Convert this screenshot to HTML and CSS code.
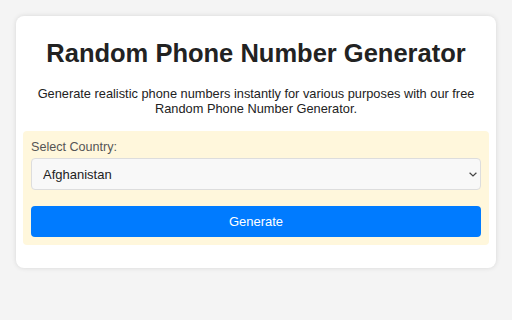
FILE: index.html
```html
<!DOCTYPE html>
<html lang="en">
<head>
<meta charset="utf-8">
<title>Random Phone Number Generator</title>
<link rel="stylesheet" href="styles.css">
</head>
<body>
<main class="card">
  <h1 class="title">Random Phone Number Generator</h1>
  <p class="lead">Generate realistic phone numbers instantly for various purposes with our free Random Phone Number Generator.</p>
  <form class="panel">
    <label class="label" for="country">Select Country:</label>
    <div class="select-wrap">
      <select id="country" class="select">
        <option>Afghanistan</option>
      </select>
      <svg class="chev" width="8" height="5" viewBox="0 0 8 5"><path d="M0.6 0.8l3.4 3.2 3.4-3.2" fill="none" stroke="#444" stroke-width="1.2"/></svg>
    </div>
    <button type="button" class="btn">Generate</button>
  </form>
</main>
</body>
</html>
```
FILE: styles.css
```css
html, body { margin: 0; padding: 0; }
body {
  background: #f4f4f4;
  font-family: "Liberation Sans", Arial, sans-serif;
  padding: 16px;
}
.card {
  width: 480px;
  box-sizing: border-box;
  background: #fff;
  border-radius: 8px;
  box-shadow: 0 0 5px rgba(0,0,0,0.12);
  padding: 20px 7px 23px;
}
.title {
  margin: 0;
  text-align: center;
  font-size: 25.5px;
  line-height: 34px;
  color: #222;
  font-weight: bold;
}
.lead {
  margin: 16px 0 15px;
  text-align: center;
  font-size: 12.8px;
  line-height: 15px;
  color: #222;
}
.panel {
  background: #fff7dc;
  border-radius: 4px;
  padding: 8px;
  display: flex;
  flex-direction: column;
}
.label {
  font-size: 12.6px;
  line-height: 16px;
  color: #555;
  margin-bottom: 3px;
}
.select-wrap { position: relative; }
.select {
  width: 100%;
  height: 32px;
  box-sizing: border-box;
  appearance: none;
  background: #f8f8f8;
  border: 1px solid #ddd;
  border-radius: 4px;
  font-family: inherit;
  font-size: 13px;
  color: #222;
  padding: 0 11px;
}
.chev { position: absolute; right: 4px; top: 14px; }
.btn {
  margin-top: 16px;
  height: 31px;
  border: 0;
  border-radius: 4px;
  background: #007bff;
  color: #fff;
  font-family: inherit;
  font-size: 13px;
}
```
